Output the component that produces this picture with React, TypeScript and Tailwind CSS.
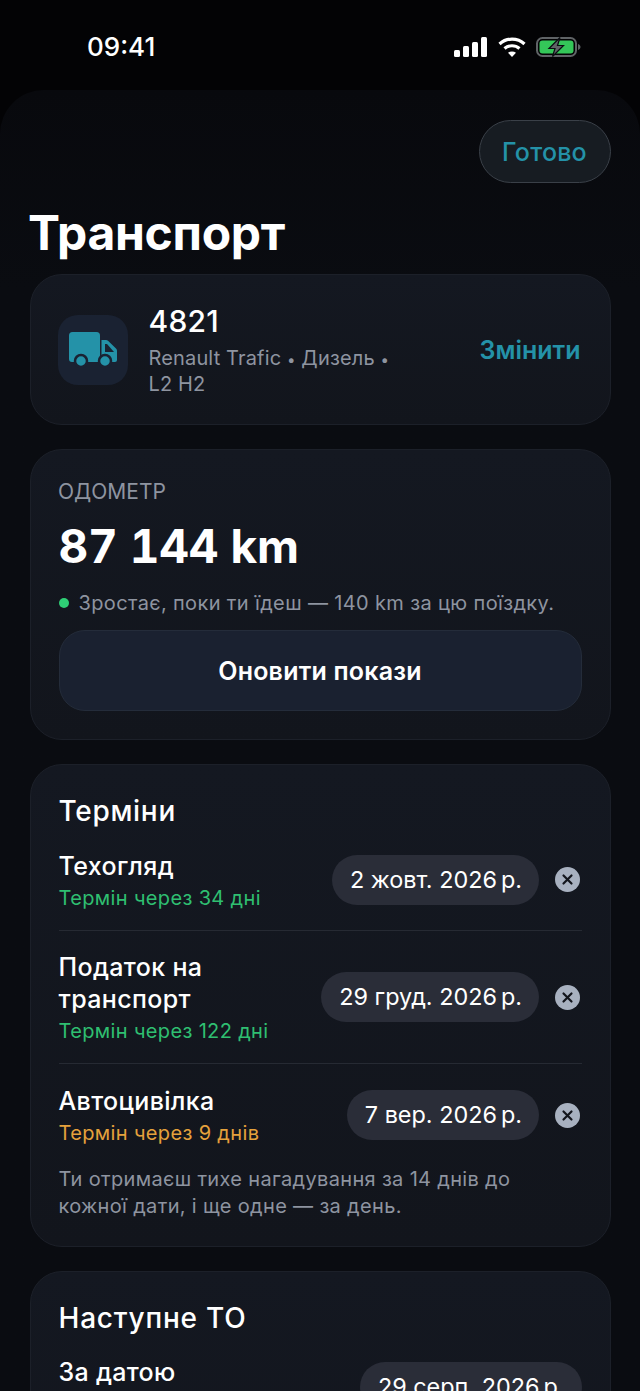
import React from "react";

const FONT = "font-['Inter','Noto_Sans',sans-serif]";

function StatusBar() {
  return (
    <div className="flex h-[90px] items-start justify-between pl-[87px] pr-[59px] pt-[31px]">
      <span className="text-[26px] leading-[32px] font-medium text-white">09:41</span>
      <div className="flex items-center gap-[10.5px] pt-[6px]">
        <svg width="33" height="20" viewBox="0 0 33 20" fill="#fff">
          <rect x="0" y="13" width="6" height="7" rx="1.5" />
          <rect x="9" y="9" width="6" height="11" rx="1.5" />
          <rect x="18" y="5" width="6" height="15" rx="1.5" />
          <rect x="27" y="0" width="6" height="20" rx="1.5" />
        </svg>
        <svg width="28" height="20" viewBox="0 0 28 20" fill="none" stroke="#fff" strokeWidth="3.2">
          <path d="M1.500 7C8.500 .5 19.500 .5 26.500 7" />
          <path d="M6.500 11.500C10.800 7.800 17.200 7.800 21.500 11.500" />
          <path d="M14 20 L10 15.800 C12.300 14.200 15.700 14.200 18 15.800 Z" fill="#fff" stroke="none" />
        </svg>
        <svg width="45" height="20" viewBox="0 0 45 20" fill="none">
          <rect x="1" y="1" width="39" height="18" rx="5.500" stroke="#5f6366" strokeWidth="2" />
          <rect x="3.500" y="3.500" width="34" height="13" rx="3" fill="#34c759" />
          <path d="M42 7v6c1.500-.5 2.500-1.700 2.500-3S43.500 7.500 42 7Z" fill="#5f6366" />
          <path d="M24 .5 13 11.500h6L16.500 19.500 27.500 8.500h-6L24 .5Z" fill="#5f6366" stroke="#0a0c11" strokeWidth="1.200" />
        </svg>
      </div>
    </div>
  );
}

function Card({ className, children }: { className: string; children: React.ReactNode }) {
  return (
    <section className={`rounded-[32px] border border-[#1c2029] bg-gradient-to-b from-[#141821] to-[#12151c] ${className}`}>
      {children}
    </section>
  );
}

function ClearIcon() {
  return (
    <span className="flex h-[25px] w-[25px] shrink-0 items-center justify-center rounded-full bg-[#a8b1c0]">
      <svg width="13" height="13" viewBox="0 0 13 13" stroke="#12151c" strokeWidth="2.200" strokeLinecap="round">
        <path d="M2.500 2.500l8 8M10.500 2.500l-8 8" />
      </svg>
    </span>
  );
}

function DatePill({ day }: { day: string }) {
  return (
    <div className="flex h-[50px] shrink-0 items-center rounded-full bg-[#2a2d38] pl-[18px] pr-[17px] text-[23.4px] whitespace-nowrap text-white">
      {day}
      <span className="ml-[4px]">р.</span>
    </div>
  );
}

function DateRow({
  title,
  status,
  statusColor,
  day,
  divider,
  className,
}: {
  title: React.ReactNode;
  status: string;
  statusColor: string;
  day: string;
  divider?: boolean;
  className: string;
}) {
  return (
    <div className={`flex items-center gap-[16px] ${divider ? "border-b border-[#262a33]" : ""} ${className}`}>
      <div className="min-w-0 flex-1 pt-[2px]">
        <div className="text-[25px] leading-[32px] font-medium tracking-[0.35px] text-white">{title}</div>
        <div className={`mt-[2px] text-[20px] leading-[28px] tracking-[0.35px] ${statusColor}`}>{status}</div>
      </div>
      <DatePill day={day} />
      <span className="mr-[1.5px]">
        <ClearIcon />
      </span>
    </div>
  );
}

export default function App() {
  return (
    <div className={`h-[1391px] overflow-hidden bg-[#030305] ${FONT}`}>
      <StatusBar />
      <main className="rounded-t-[44px] bg-gradient-to-b from-[#08090d] to-[#0a0c11] to-[200px] px-[29.5px]">
        <div className="flex justify-end pt-[30px]">
          <button className="h-[63px] w-[132px] rounded-full border border-[#3a4048] bg-[#171c22] pt-[2px] text-[25px] font-medium tracking-[0.2px] text-[#2492a8]">
            Готово
          </button>
        </div>
        <h1 className="mt-[19px] -ml-[1.5px] text-[48px] leading-[62px] font-bold tracking-[-0.3px] text-white">Транспорт</h1>

        <Card className="mt-[10px] flex h-[151px] items-center pl-[27.5px] pr-[29px]">
          <div className="flex h-[70px] w-[70px] shrink-0 items-center justify-center rounded-[20px] bg-[#1a2232]">
            <svg width="48" height="36" viewBox="0 0 48 36" fill="#2492a8">
              <path d="M3.500 0h24a3.500 3.500 0 0 1 3.500 3.500V30H3a3 3 0 0 1-3-3V3.500A3.500 3.500 0 0 1 3.500 0Z" />
              <path d="M32.500 8h4.500a3 3 0 0 1 2 .8l8 7.700a3 3 0 0 1 1 2.200V28a2 2 0 0 1-2 2H32.500Z" />
              <path d="M36 12v8h9l-7-8Z" fill="#1a2232" />
              <circle cx="12" cy="29" r="6" stroke="#1a2232" strokeWidth="2.500" />
              <circle cx="36" cy="29" r="6" stroke="#1a2232" strokeWidth="2.500" />
            </svg>
          </div>
          <div className="ml-[20.5px] min-w-0 flex-1">
            <div className="text-[30px] leading-[36px] font-medium tracking-[0.2px] text-white">4821</div>
            <div className="mt-[7px] w-[260px] text-[20px] leading-[25px] tracking-[0.15px] text-[#8e94a0]">
              Renault Trafic <span className="text-[15px]">•</span> Дизель <span className="text-[15px]">•</span> L2 H2
            </div>
          </div>
          <span className="pt-[2px] text-[25px] font-semibold text-[#2492a8]">Змінити</span>
        </Card>

        <Card className="mt-[24px] h-[291px] px-[28px] pt-[28px]">
          <div className="-ml-[0.5px] text-[21px] leading-[28px] text-[#8e94a0]">ОДОМЕТР</div>
          <div className="mt-[11px] text-[46px] leading-[58px] font-bold tracking-[-0.2px] tabular-nums text-white">87 144 km</div>
          <div className="mt-[14px] flex items-center gap-[10px] text-[20px] leading-[28px] tracking-[0.36px] text-[#8e94a0]">
            <span className="h-[10px] w-[10px] rounded-full bg-[#2fcf76]" />
            <span className="whitespace-nowrap">Зростає, поки ти їдеш — 140 km за цю поїздку.</span>
          </div>
          <button className="mt-[13px] h-[81px] w-full rounded-[26px] border border-[#242c3a] bg-[#1a2130] pt-[2px] text-[25px] font-semibold tracking-[0.2px] text-white">
            Оновити покази
          </button>
        </Card>

        <Card className="mt-[24px] h-[483px] px-[28px] pt-[28px]">
          <h2 className="text-[28px] leading-[36px] font-medium tracking-[0.7px] text-white">Терміни</h2>
          <DateRow title="Техогляд" status="Термін через 34 дні" statusColor="text-[#2fbf71]" day="2 жовт. 2026" divider className="h-[102px]" />
          <DateRow title={<>Податок на<br />транспорт</>} status="Термін через 122 дні" statusColor="text-[#2fbf71]" day="29 груд. 2026" divider className="h-[133px]" />
          <DateRow title="Автоцивілка" status="Термін через 9 днів" statusColor="text-[#e5a13c]" day="7 вер. 2026" className="h-[102px]" />
          <p className="text-[20px] leading-[27px] tracking-[0.33px] text-[#8e94a0]">
            Ти отримаєш тихе нагадування за 14 днів до
            <br />
            кожної дати, і ще одне — за день.
          </p>
        </Card>

        <Card className="mt-[24px] h-[300px] px-[28px] pt-[28px]">
          <h2 className="text-[28px] leading-[36px] font-medium tracking-[0.8px] text-white">Наступне ТО</h2>
          <div className="mt-[26px] flex items-start justify-between">
            <div className="-mt-[6px] text-[25px] leading-[32px] font-medium tracking-[0.3px] text-white">За датою</div>
            <DatePill day="29 серп. 2026" />
          </div>
        </Card>
      </main>
    </div>
  );
}
